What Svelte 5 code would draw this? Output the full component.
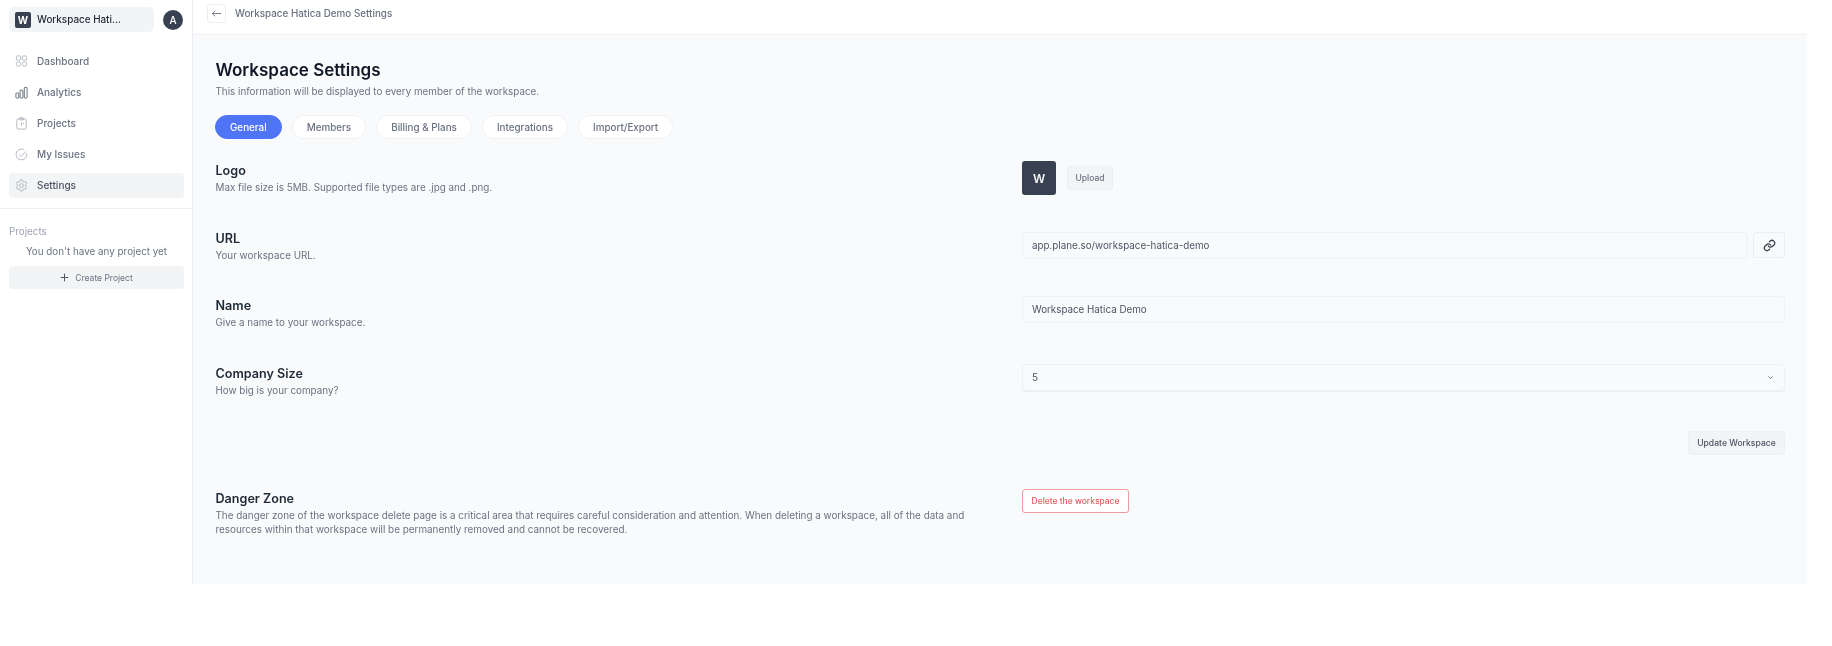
<script>
  const nav = [
    { label: 'Dashboard', icon: 'dash' },
    { label: 'Analytics', icon: 'bars' },
    { label: 'Projects', icon: 'clip' },
    { label: 'My Issues', icon: 'check' },
    { label: 'Settings', icon: 'gear', active: true }
  ];
  const tabs = ['General', 'Members', 'Billing & Plans', 'Integrations', 'Import/Export'];
</script>

<div class="page">
  <aside class="sidebar">
    <div class="top">
      <div class="switcher">
        <span class="ws-logo">W</span>
        <span class="ws-name">Workspace Hati...</span>
      </div>
      <span class="avatar">A</span>
    </div>
    <nav class="nav">
      {#each nav as item}
        <div class="nav-item" class:active={item.active}>
          <svg class="nav-icon" class:dark={item.icon === 'bars'} viewBox="0 0 14 14" fill="none" stroke="currentColor" stroke-width="0.9">
            {#if item.icon === 'dash'}
              <rect x="1.5" y="1" width="4.5" height="4.5" rx="1" />
              <rect x="8" y="1" width="4.5" height="4.5" rx="1" />
              <rect x="1.5" y="7.5" width="4.5" height="4.5" rx="1.8" />
              <rect x="8" y="7.5" width="4.5" height="4.5" rx="1.8" />
            {:else if item.icon === 'bars'}
              <rect x="1" y="7.5" width="3" height="5.5" rx="0.7" />
              <rect x="5.5" y="4.5" width="3" height="8.5" rx="0.7" />
              <rect x="10" y="1.5" width="3" height="11.5" rx="0.7" />
            {:else if item.icon === 'clip'}
              <rect x="2" y="2" width="10" height="11" rx="1.4" />
              <rect x="4.8" y="0.9" width="4.4" height="2.2" rx="0.6" />
              <path d="M7 6v3.5M9.2 6v1.6" />
            {:else if item.icon === 'check'}
              <path d="M12.6 5.6A5.8 5.8 0 1 1 9.4 1.7" />
              <path d="M4.6 7l2 2 5-5.2" />
            {:else}
              <circle cx="7" cy="7" r="2" />
              <path d="M5.9 1h2.2l.4 1.7 1.3.7 1.7-.5 1.1 1.9-1.2 1.3v1.7l1.2 1.3-1.1 1.9-1.7-.5-1.3.7-.4 1.7H5.9l-.4-1.7-1.3-.7-1.7.5-1.1-1.9 1.2-1.3V6.1L1.4 4.8l1.1-1.9 1.7.5 1.3-.7z" stroke-linejoin="round" />
            {/if}
          </svg>
          <span>{item.label}</span>
        </div>
      {/each}
    </nav>
    <div class="projects">
      <div class="projects-label">Projects</div>
      <p class="empty">You don't have any project yet</p>
      <div class="create">
        <svg viewBox="0 0 10 10" width="9" height="9" fill="none" stroke="currentColor" stroke-width="1.1"><path d="M5 .8v8.4M.8 5h8.4" /></svg>
        <span>Create Project</span>
      </div>
    </div>
  </aside>

  <div class="main">
    <header class="header">
      <span class="back">
        <svg viewBox="0 0 12 12" width="11" height="11" fill="none" stroke="currentColor" stroke-width="1"><path d="M11 6H1.5M4.5 3 1.5 6l3 3" /></svg>
      </span>
      <span class="crumb">Workspace Hatica Demo Settings</span>
    </header>

    <main class="content">
      <h1>Workspace Settings</h1>
      <p class="sub">This information will be displayed to every member of the workspace.</p>

      <div class="tabs">
        {#each tabs as tab, i}
          <span class="tab" class:selected={i === 0}>{tab}</span>
        {/each}
      </div>

      <section class="row logo-row">
        <div>
          <h2>Logo</h2>
          <p>Max file size is 5MB. Supported file types are .jpg and .png.</p>
        </div>
        <div class="control logo-control">
          <span class="logo-box">W</span>
          <span class="upload">Upload</span>
        </div>
      </section>

      <section class="row url-row">
        <div>
          <h2>URL</h2>
          <p>Your workspace URL.</p>
        </div>
        <div class="control url-control">
          <div class="field grow">app.plane.so/workspace-hatica-demo</div>
          <span class="copy">
            <svg viewBox="0 0 24 24" width="13" height="13" fill="none" stroke="#3a3f4a" stroke-width="2.4" stroke-linecap="round" stroke-linejoin="round">
              <path d="M10 13a5 5 0 0 0 7.5.5l3-3a5 5 0 0 0-7-7l-1.7 1.7" />
              <path d="M14 11a5 5 0 0 0-7.5-.5l-3 3a5 5 0 0 0 7 7l1.7-1.7" />
            </svg>
          </span>
        </div>
      </section>

      <section class="row name-row">
        <div>
          <h2>Name</h2>
          <p>Give a name to your workspace.</p>
        </div>
        <div class="control">
          <div class="field">Workspace Hatica Demo</div>
        </div>
      </section>

      <section class="row size-row">
        <div>
          <h2>Company Size</h2>
          <p>How big is your company?</p>
        </div>
        <div class="control">
          <div class="field select">
            <span>5</span>
            <svg viewBox="0 0 10 10" width="7" height="7" fill="none" stroke="#6b7280" stroke-width="1.3"><path d="M2 3.5 5 6.5 8 3.5" /></svg>
          </div>
        </div>
      </section>

      <div class="actions"><span class="update">Update Workspace</span></div>

      <section class="row danger-row">
        <div>
          <h2>Danger Zone</h2>
          <p class="danger-text">The danger zone of the workspace delete page is a critical area that requires careful consideration and attention. When deleting a workspace, all of the data and resources within that workspace will be permanently removed and cannot be recovered.</p>
        </div>
        <div class="control">
          <span class="delete">Delete the workspace</span>
        </div>
      </section>
    </main>
  </div>
</div>

<style>
  :global(body) {
    margin: 0;
    background: #fff;
  }
  .page {
    display: flex;
    width: 1807px;
    height: 584px;
    font-family: Inter, "Liberation Sans", sans-serif;
    color: #6b7280;
    font-size: 9.85px;
    overflow: hidden;
    filter: blur(0.4px);
  }
  .sidebar {
    width: 193px;
    flex: none;
    background: #fff;
    border-right: 1px solid #eceef1;
    box-sizing: border-box;
  }
  .top {
    display: flex;
    align-items: center;
    padding: 7px 0 0 9px;
    gap: 9px;
  }
  .switcher {
    width: 145px;
    height: 25px;
    border-radius: 5px;
    background: #f3f4f6;
    display: flex;
    align-items: center;
    gap: 6px;
    padding: 0 0 0 6px;
    box-sizing: border-box;
  }
  .ws-logo {
    width: 16px;
    height: 16px;
    border-radius: 2px;
    background: #374151;
    color: #fff;
    display: flex;
    align-items: center;
    justify-content: center;
    font-size: 10px;
    font-weight: 700;
  }
  .ws-name {
    font-weight: 500;
    color: #1f2937;
    font-size: 9.9px;
    white-space: nowrap;
    padding-bottom: 1px;
  }
  .avatar {
    width: 20px;
    height: 20px;
    border-radius: 50%;
    background: #374151;
    color: #fff;
    display: flex;
    align-items: center;
    justify-content: center;
    font-size: 10px;
    font-weight: 500;
  }
  .nav {
    display: flex;
    flex-direction: column;
    gap: 6px;
    padding: 17px 8px 10px 9px;
    border-bottom: 1px solid #eef0f2;
  }
  .nav-item {
    height: 25px;
    box-sizing: border-box;
    padding: 0 0 1px 6px;
    display: flex;
    align-items: center;
    gap: 9px;
    border-radius: 4px;
    color: #6b7280;
    font-weight: 500;
    font-size: 10px;
  }
  .nav-item.active {
    background: #f3f4f6;
    color: #4b5563;
  }
  .nav-icon {
    width: 13px;
    height: 13px;
    color: #a8adb5;
  }
  .nav-icon.dark {
    color: #4b5563;
  }
  .projects {
    padding: 16px 8px 0 9px;
  }
  .projects-label {
    color: #9ca3af;
    font-size: 9.85px;
    line-height: 13px;
  }
  .empty {
    margin: 7px 0 8px;
    text-align: center;
    font-size: 9.85px;
    line-height: 13px;
    color: #6b7280;
  }
  .create {
    height: 23px;
    border-radius: 4px;
    background: #f3f4f6;
    display: flex;
    align-items: center;
    justify-content: center;
    gap: 6px;
    font-size: 8.5px;
    color: #6b7280;
  }
  .create svg {
    color: #4b5563;
  }
  .main {
    flex: 1;
    min-width: 0;
    display: flex;
    flex-direction: column;
    background: #f9fafb;
  }
  .header {
    height: 35px;
    flex: none;
    box-sizing: border-box;
    background: #fff;
    border-bottom: 1px solid #eef0f2;
    display: flex;
    align-items: flex-start;
    gap: 9px;
    padding: 4px 0 0 14px;
  }
  .back {
    width: 19px;
    height: 19px;
    box-sizing: border-box;
    border: 1px solid #eceef1;
    border-radius: 3px;
    display: flex;
    align-items: center;
    justify-content: center;
    color: #6b7280;
  }
  .crumb {
    line-height: 19px;
    font-size: 9.85px;
    color: #6b7280;
    font-weight: 500;
  }
  .content {
    padding: 24px 22px 0 22.5px;
  }
  h1 {
    margin: 0;
    font-size: 17px;
    line-height: 22px;
    font-weight: 600;
    color: #111827;
  }
  .sub {
    margin: 3px 0 0;
    font-size: 9.85px;
    line-height: 14px;
    color: #6b7280;
  }
  .tabs {
    display: flex;
    gap: 10px;
    margin: 17px 0 0 -0.5px;
  }
  .tab {
    height: 24px;
    box-sizing: border-box;
    padding: 0 14px;
    border-radius: 12px;
    background: #fff;
    border: 1px solid #f0f1f3;
    display: flex;
    align-items: center;
    color: #6b7280;
    font-weight: 500;
    font-size: 9.85px;
  }
  .tab.selected {
    background: #4f75f6;
    border-color: #4f75f6;
    color: #fff;
  }
  .row {
    display: grid;
    grid-template-columns: 806.5px 1fr;
  }
  h2 {
    margin: 0;
    font-size: 12.6px;
    line-height: 18px;
    font-weight: 600;
    color: #1f2937;
  }
  .row p {
    margin: 0;
    font-size: 9.85px;
    line-height: 14px;
    color: #6b7280;
  }
  .logo-row { margin-top: 23px; }
  .url-row { margin-top: 35px; }
  .name-row { margin-top: 35px; }
  .size-row { margin-top: 36px; }
  .control {
    min-width: 0;
  }
  .logo-control {
    display: flex;
    align-items: center;
    gap: 11px;
    height: 34px;
    margin-top: -1px;
  }
  .logo-box {
    width: 34px;
    height: 34px;
    border-radius: 3px;
    background: #374151;
    color: #f3f4f6;
    display: flex;
    align-items: center;
    justify-content: center;
    font-size: 12px;
    font-weight: 600;
  }
  .upload {
    width: 46px;
    height: 24px;
    border-radius: 3px;
    background: #f3f4f6;
    border: 1px solid #eff0f2;
    box-sizing: border-box;
    display: flex;
    align-items: center;
    justify-content: center;
    font-size: 8.5px;
    font-weight: 500;
    color: #6b7280;
  }
  .url-control {
    display: flex;
    gap: 5px;
    margin-top: 2px;
  }
  .name-row .control {
    margin-top: -1px;
  }
  .size-row .control {
    margin-top: -1px;
  }
  .field {
    height: 27px;
    box-sizing: border-box;
    border: 1px solid #eff1f3;
    border-radius: 4px;
    background: #f9fafb;
    display: flex;
    align-items: center;
    padding: 0 9px;
    font-size: 9.8px;
    color: #4b5563;
  }
  .grow {
    flex: 1;
  }
  .select {
    justify-content: space-between;
    box-shadow: 0 1px 1px #eceef1;
  }
  .select svg {
    margin-right: 1px;
  }
  .copy {
    width: 32px;
    flex: none;
    height: 26px;
    box-sizing: border-box;
    border: 1px solid #eceef1;
    border-radius: 3px;
    display: flex;
    align-items: center;
    justify-content: center;
  }
  .actions {
    display: flex;
    justify-content: flex-end;
    margin-top: 34px;
  }
  .update {
    height: 24px;
    width: 97px;
    box-sizing: border-box;
    background: #f3f4f6;
    border: 1px solid #eff0f2;
    border-radius: 3px;
    display: flex;
    align-items: center;
    justify-content: center;
    font-size: 8.6px;
    font-weight: 500;
    color: #4b5563;
  }
  .danger-row {
    margin-top: 35px;
  }
  .danger-row > div:first-child {
    min-width: 0;
  }
  .row p.danger-text {
    width: 775px;
    font-size: 9.9px;
    line-height: 14px;
    margin-top: 0;
  }
  .danger-row .control {
    margin-top: -1px;
  }
  .delete {
    display: flex;
    align-items: center;
    justify-content: center;
    width: 107px;
    height: 24px;
    box-sizing: border-box;
    background: #fff;
    border: 1px solid #ee9b9b;
    border-radius: 3px;
    color: #e06060;
    font-size: 8.45px;
    font-weight: 500;
  }
</style>
